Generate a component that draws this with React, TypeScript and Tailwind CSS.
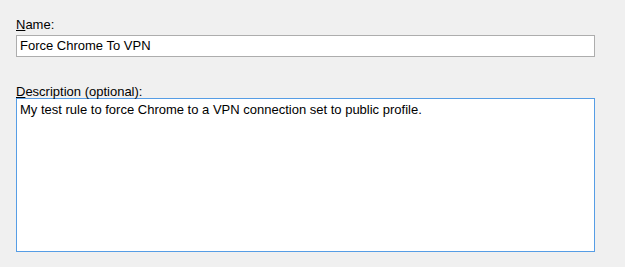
export default function App() {
  return (
    <div className="w-[625px] h-[267px] bg-[#f0f0f0] px-4 pt-[18px] text-[13px] text-black font-['Liberation_Sans',Arial,sans-serif]">
      <label className="block leading-[13px]">
        <span className="underline">N</span>ame:
      </label>
      <div className="mt-[4px] w-[579px] h-[22px] bg-white border border-[#adadad] px-[3px] leading-[20px]">
        Force Chrome To VPN
      </div>

      <label className="block mt-[28px] leading-[13px]">
        <span className="underline">D</span>escription (optional):
      </label>
      <div className="w-[579px] h-[154px] bg-white border border-[#569de5] px-[3px] pt-[3px] leading-[16px]">
        My test rule to force Chrome to a VPN connection set to public profile.
      </div>
    </div>
  );
}
